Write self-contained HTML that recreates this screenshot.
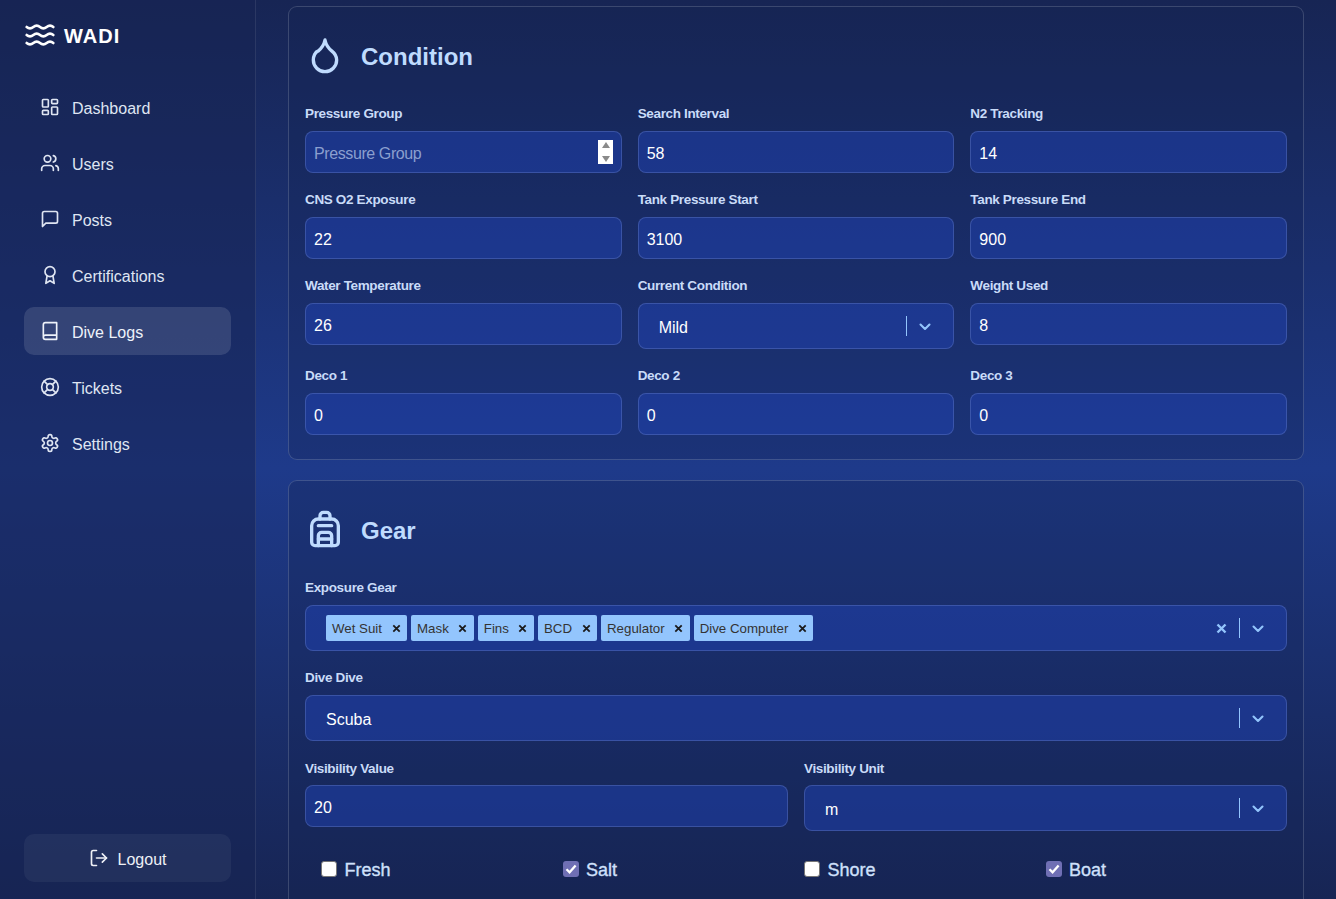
<!DOCTYPE html>
<html><head><meta charset="utf-8">
<style>
*{box-sizing:border-box;margin:0;padding:0}
html,body{width:1336px;height:899px;overflow:hidden}
body{font-family:"Liberation Sans",sans-serif;position:relative;
background:linear-gradient(to bottom,#172554 0%,#1e3a8a 52%,#172554 100%);}
.sb{position:absolute;left:0;top:0;width:256px;height:899px;background:rgba(23,37,84,0.55);border-right:1px solid rgba(255,255,255,0.09)}
.logo{position:absolute;left:24px;top:19px;width:32px;height:32px}
.wadi{position:absolute;left:64px;top:26px;font-size:20px;line-height:20px;font-weight:bold;color:#fff;letter-spacing:1px}
.nav{position:absolute;left:24px;width:207px;height:48px;border-radius:10px;display:flex;align-items:center;padding-left:16px;padding-top:3px;color:#dfe5f2;font-size:16px;line-height:24px}
.nav svg{width:20px;height:20px;margin-right:12px;flex:none;position:relative;top:-1.5px}
.nav.act{background:rgba(255,255,255,0.12);color:#eef2fa}
.logout{position:absolute;left:24px;top:834px;width:207px;height:48px;border-radius:10px;background:rgba(255,255,255,0.05);display:flex;align-items:center;justify-content:center;color:#eef0f6;font-size:16px;padding-top:3px}
.logout svg{width:20px;height:20px;margin-right:9px;position:relative;top:-1.5px}
svg.ic{fill:none;stroke:currentColor;stroke-width:2;stroke-linecap:round;stroke-linejoin:round}
.card{position:absolute;left:288px;width:1016px;border:1px solid rgba(255,255,255,0.16);border-radius:9px;background:rgba(23,37,84,0.32)}
.hicon{position:absolute;left:305px;width:40px;height:40px;color:#bfdbfe}
.htxt{position:absolute;left:361px;font-size:24px;line-height:24px;font-weight:bold;color:#bfdbfe}
.lbl{position:absolute;font-size:13.5px;line-height:13px;letter-spacing:-0.35px;font-weight:bold;color:#c9dbf8}
.inp{position:absolute;height:42px;border:1px solid rgba(125,150,225,0.3);border-radius:8px;background:rgba(31,66,180,0.5);color:#fff;font-size:16px;line-height:16px;padding-left:8px;padding-top:3px;display:flex;align-items:center}
.sel{position:absolute;height:46px;border:1px solid rgba(125,150,225,0.3);border-radius:8px;background:rgba(31,66,180,0.5);color:#fff;font-size:16px;padding-left:20px;padding-top:3px;display:flex;align-items:center}
.ind{position:absolute;right:22px;top:0;height:44px;display:flex;align-items:center}
.sep{width:1px;height:20px;background:#93c5fd;margin-right:12px}
.chev{width:12px;height:8px;margin-top:2px}
.chip{display:inline-flex;align-items:center;height:26px;background:#93c5fd;border-radius:2px;color:#333;font-size:13.3px;margin-right:4px;padding-left:6px}
.chip .x{width:22px;display:flex;justify-content:center;margin-left:3px}
.cb{position:absolute;top:861px;width:16px;height:16px;border-radius:3px}
.cb.off{background:#fff;border:1px solid #767676}
.cb.on{background:#6f6fb4}
.spin{position:absolute;left:292px;top:8px;width:15px;height:24px;background:#fff}.spin i{position:absolute;left:3.5px;width:0;height:0;border-left:4px solid transparent;border-right:4px solid transparent}.spin .up{top:2px;border-bottom:6px solid #8a8a8a}.spin .dn{top:16px;border-top:6px solid #8a8a8a}
.cbl{position:absolute;font-size:18px;line-height:18px;color:#cfe0fb;-webkit-text-stroke:0.35px #cfe0fb;margin-left:-1px}
</style></head><body>
<div class="sb">
  <svg class="logo ic" viewBox="0 0 24 24" style="color:#fff"><path d="M2 6c.6.5 1.2 1 2.5 1C7 7 7 5 9.5 5c2.6 0 2.4 2 5 2 2.5 0 2.5-2 5-2 1.3 0 1.9.5 2.5 1"/><path d="M2 12c.6.5 1.2 1 2.5 1 2.5 0 2.5-2 5-2 2.6 0 2.4 2 5 2 2.5 0 2.5-2 5-2 1.3 0 1.9.5 2.5 1"/><path d="M2 18c.6.5 1.2 1 2.5 1 2.5 0 2.5-2 5-2 2.6 0 2.4 2 5 2 2.5 0 2.5-2 5-2 1.3 0 1.9.5 2.5 1"/></svg>
  <div class="wadi">WADI</div>

  <div class="nav" style="top:83px"><svg class="ic" viewBox="0 0 24 24"><rect width="7" height="9" x="3" y="3" rx="1"/><rect width="7" height="5" x="14" y="3" rx="1"/><rect width="7" height="9" x="14" y="12" rx="1"/><rect width="7" height="5" x="3" y="16" rx="1"/></svg>Dashboard</div>
  <div class="nav" style="top:139px"><svg class="ic" viewBox="0 0 24 24"><path d="M16 21v-2a4 4 0 0 0-4-4H6a4 4 0 0 0-4 4v2"/><circle cx="9" cy="7" r="4"/><path d="M22 21v-2a4 4 0 0 0-3-3.87"/><path d="M16 3.13a4 4 0 0 1 0 7.75"/></svg>Users</div>
  <div class="nav" style="top:195px"><svg class="ic" viewBox="0 0 24 24"><path d="M21 15a2 2 0 0 1-2 2H7l-4 4V5a2 2 0 0 1 2-2h14a2 2 0 0 1 2 2z"/></svg>Posts</div>
  <div class="nav" style="top:251px"><svg class="ic" viewBox="0 0 24 24"><circle cx="12" cy="8" r="6"/><path d="M15.477 12.89 17 22l-5-3-5 3 1.523-9.11"/></svg>Certifications</div>
  <div class="nav act" style="top:307px"><svg class="ic" viewBox="0 0 24 24"><path d="M4 19.5v-15A2.5 2.5 0 0 1 6.5 2H20v20H6.5a2.5 2.5 0 0 1 0-5H20"/></svg>Dive Logs</div>
  <div class="nav" style="top:363px"><svg class="ic" viewBox="0 0 24 24"><circle cx="12" cy="12" r="10"/><path d="m4.93 4.93 4.24 4.24"/><path d="m14.83 9.17 4.24-4.24"/><path d="m14.83 14.83 4.24 4.24"/><path d="m9.17 14.83-4.24 4.24"/><circle cx="12" cy="12" r="4"/></svg>Tickets</div>
  <div class="nav" style="top:419px"><svg class="ic" viewBox="0 0 24 24"><path d="M12.22 2h-.44a2 2 0 0 0-2 2v.18a2 2 0 0 1-1 1.73l-.43.25a2 2 0 0 1-2 0l-.15-.08a2 2 0 0 0-2.73.73l-.22.38a2 2 0 0 0 .73 2.73l.15.1a2 2 0 0 1 1 1.72v.51a2 2 0 0 1-1 1.74l-.15.09a2 2 0 0 0-.73 2.73l.22.38a2 2 0 0 0 2.73.73l.15-.08a2 2 0 0 1 2 0l.43.25a2 2 0 0 1 1 1.73V20a2 2 0 0 0 2 2h.44a2 2 0 0 0 2-2v-.18a2 2 0 0 1 1-1.73l.43-.25a2 2 0 0 1 2 0l.15.08a2 2 0 0 0 2.73-.73l.22-.39a2 2 0 0 0-.73-2.73l-.15-.08a2 2 0 0 1-1-1.74v-.5a2 2 0 0 1 1-1.74l.15-.09a2 2 0 0 0 .73-2.73l-.22-.38a2 2 0 0 0-2.73-.73l-.15.08a2 2 0 0 1-2 0l-.43-.25a2 2 0 0 1-1-1.73V4a2 2 0 0 0-2-2z"/><circle cx="12" cy="12" r="3"/></svg>Settings</div>

  <div class="logout"><svg class="ic" viewBox="0 0 24 24"><path d="M9 21H5a2 2 0 0 1-2-2V5a2 2 0 0 1 2-2h4"/><polyline points="16 17 21 12 16 7"/><line x1="21" x2="9" y1="12" y2="12"/></svg>Logout</div>
</div>

<!-- CARD 1 -->
<div class="card" style="top:6px;height:454px"></div>
<svg class="hicon ic" style="top:35px" viewBox="0 0 24 24"><path d="M12 22a7 7 0 0 0 7-7c0-2-1-3.9-3-5.5s-3.5-4-4-6.5c-.5 2.5-2 4.9-4 6.5C6 10.1 5 13 5 15a7 7 0 0 0 7 7z"/></svg>
<div class="htxt" style="top:45px">Condition</div>

<div class="lbl" style="left:305px;top:106.8px">Pressure Group</div>
<div class="inp" style="left:305px;top:131px;width:316.67px"><span style="color:#8b9fcf;letter-spacing:-0.4px">Pressure Group</span><div class="spin"><i class="up"></i><i class="dn"></i></div></div>
<div class="lbl" style="left:637.67px;top:106.8px">Search Interval</div>
<div class="inp" style="left:637.67px;top:131px;width:316.67px">58</div>
<div class="lbl" style="left:970.33px;top:106.8px">N2 Tracking</div>
<div class="inp" style="left:970.33px;top:131px;width:316.67px">14</div>
<div class="lbl" style="left:305px;top:193px">CNS O2 Exposure</div>
<div class="inp" style="left:305px;top:217px;width:316.67px">22</div>
<div class="lbl" style="left:637.67px;top:193px">Tank Pressure Start</div>
<div class="inp" style="left:637.67px;top:217px;width:316.67px">3100</div>
<div class="lbl" style="left:970.33px;top:193px">Tank Pressure End</div>
<div class="inp" style="left:970.33px;top:217px;width:316.67px">900</div>
<div class="lbl" style="left:305px;top:279px">Water Temperature</div>
<div class="inp" style="left:305px;top:303px;width:316.67px">26</div>
<div class="lbl" style="left:637.67px;top:279px">Current Condition</div>
<div class="sel" style="left:637.67px;top:303px;width:316.67px">Mild<div class="ind"><div class="sep"></div><svg class="chev" viewBox="0 0 12 8"><path d="M1.5 1.5 6 6l4.5-4.5" fill="none" stroke="#93c5fd" stroke-width="2.1" stroke-linecap="round" stroke-linejoin="round"/></svg></div></div>
<div class="lbl" style="left:970.33px;top:279px">Weight Used</div>
<div class="inp" style="left:970.33px;top:303px;width:316.67px">8</div>
<div class="lbl" style="left:305px;top:368.9px">Deco 1</div>
<div class="inp" style="left:305px;top:393px;width:316.67px">0</div>
<div class="lbl" style="left:637.67px;top:368.9px">Deco 2</div>
<div class="inp" style="left:637.67px;top:393px;width:316.67px">0</div>
<div class="lbl" style="left:970.33px;top:368.9px">Deco 3</div>
<div class="inp" style="left:970.33px;top:393px;width:316.67px">0</div>

<!-- CARD 2 -->
<div class="card" style="top:480px;height:460px"></div>
<svg class="hicon ic" style="top:509px" viewBox="0 0 24 24"><path d="M4 10a4 4 0 0 1 4-4h8a4 4 0 0 1 4 4v10a2 2 0 0 1-2 2H6a2 2 0 0 1-2-2z"/><path d="M8 10h8"/><path d="M8 18h8"/><path d="M8 22v-6a2 2 0 0 1 2-2h4a2 2 0 0 1 2 2v6"/><path d="M9 6V4a2 2 0 0 1 2-2h2a2 2 0 0 1 2 2v2"/></svg>
<div class="htxt" style="top:519px">Gear</div>

<div class="lbl" style="left:305px;top:581.2px">Exposure Gear</div>
<div class="sel" style="left:305px;top:605px;width:982px;padding-left:20px;padding-top:0"><span class="chip">Wet Suit<span class="x"><svg width="9" height="9" viewBox="0 0 9 9"><path d="M1.3 1.3 7.7 7.7M7.7 1.3 1.3 7.7" stroke="#1a1a1a" stroke-width="1.8"/></svg></span></span><span class="chip">Mask<span class="x"><svg width="9" height="9" viewBox="0 0 9 9"><path d="M1.3 1.3 7.7 7.7M7.7 1.3 1.3 7.7" stroke="#1a1a1a" stroke-width="1.8"/></svg></span></span><span class="chip">Fins<span class="x"><svg width="9" height="9" viewBox="0 0 9 9"><path d="M1.3 1.3 7.7 7.7M7.7 1.3 1.3 7.7" stroke="#1a1a1a" stroke-width="1.8"/></svg></span></span><span class="chip">BCD<span class="x"><svg width="9" height="9" viewBox="0 0 9 9"><path d="M1.3 1.3 7.7 7.7M7.7 1.3 1.3 7.7" stroke="#1a1a1a" stroke-width="1.8"/></svg></span></span><span class="chip">Regulator<span class="x"><svg width="9" height="9" viewBox="0 0 9 9"><path d="M1.3 1.3 7.7 7.7M7.7 1.3 1.3 7.7" stroke="#1a1a1a" stroke-width="1.8"/></svg></span></span><span class="chip">Dive Computer<span class="x"><svg width="9" height="9" viewBox="0 0 9 9"><path d="M1.3 1.3 7.7 7.7M7.7 1.3 1.3 7.7" stroke="#1a1a1a" stroke-width="1.8"/></svg></span></span><div class="ind"><svg width="11" height="11" viewBox="0 0 11 11" style="margin-right:12px"><path d="M1.5 1.5 9.5 9.5M9.5 1.5 1.5 9.5" stroke="#93c5fd" stroke-width="2.4"/></svg><div class="sep"></div><svg class="chev" viewBox="0 0 12 8"><path d="M1.5 1.5 6 6l4.5-4.5" fill="none" stroke="#93c5fd" stroke-width="2.1" stroke-linecap="round" stroke-linejoin="round"/></svg></div></div>
<div class="lbl" style="left:305px;top:671.3px">Dive Dive</div>
<div class="sel" style="left:305px;top:695px;width:982px">Scuba<div class="ind"><div class="sep"></div><svg class="chev" viewBox="0 0 12 8"><path d="M1.5 1.5 6 6l4.5-4.5" fill="none" stroke="#93c5fd" stroke-width="2.1" stroke-linecap="round" stroke-linejoin="round"/></svg></div></div>
<div class="lbl" style="left:305px;top:761.5px">Visibility Value</div>
<div class="inp" style="left:305px;top:785px;width:483px">20</div>
<div class="lbl" style="left:804px;top:761.5px">Visibility Unit</div>
<div class="sel" style="left:804px;top:785px;width:483px">m<div class="ind"><div class="sep"></div><svg class="chev" viewBox="0 0 12 8"><path d="M1.5 1.5 6 6l4.5-4.5" fill="none" stroke="#93c5fd" stroke-width="2.1" stroke-linecap="round" stroke-linejoin="round"/></svg></div></div>
<div class="cb off" style="left:321px"></div>
<div class="cbl" style="left:345.5px;top:860.7px">Fresh</div>
<div class="cb on" style="left:563px"><svg width="16" height="16" viewBox="0 0 16 16"><path d="M3.5 8.2 6.6 11.3 12.6 4.6" fill="none" stroke="#fff" stroke-width="2.3"/></svg></div>
<div class="cbl" style="left:587px;top:860.7px">Salt</div>
<div class="cb off" style="left:804.4px"></div>
<div class="cbl" style="left:828.4px;top:860.7px">Shore</div>
<div class="cb on" style="left:1046px"><svg width="16" height="16" viewBox="0 0 16 16"><path d="M3.5 8.2 6.6 11.3 12.6 4.6" fill="none" stroke="#fff" stroke-width="2.3"/></svg></div>
<div class="cbl" style="left:1070px;top:860.7px">Boat</div>
</body></html>
